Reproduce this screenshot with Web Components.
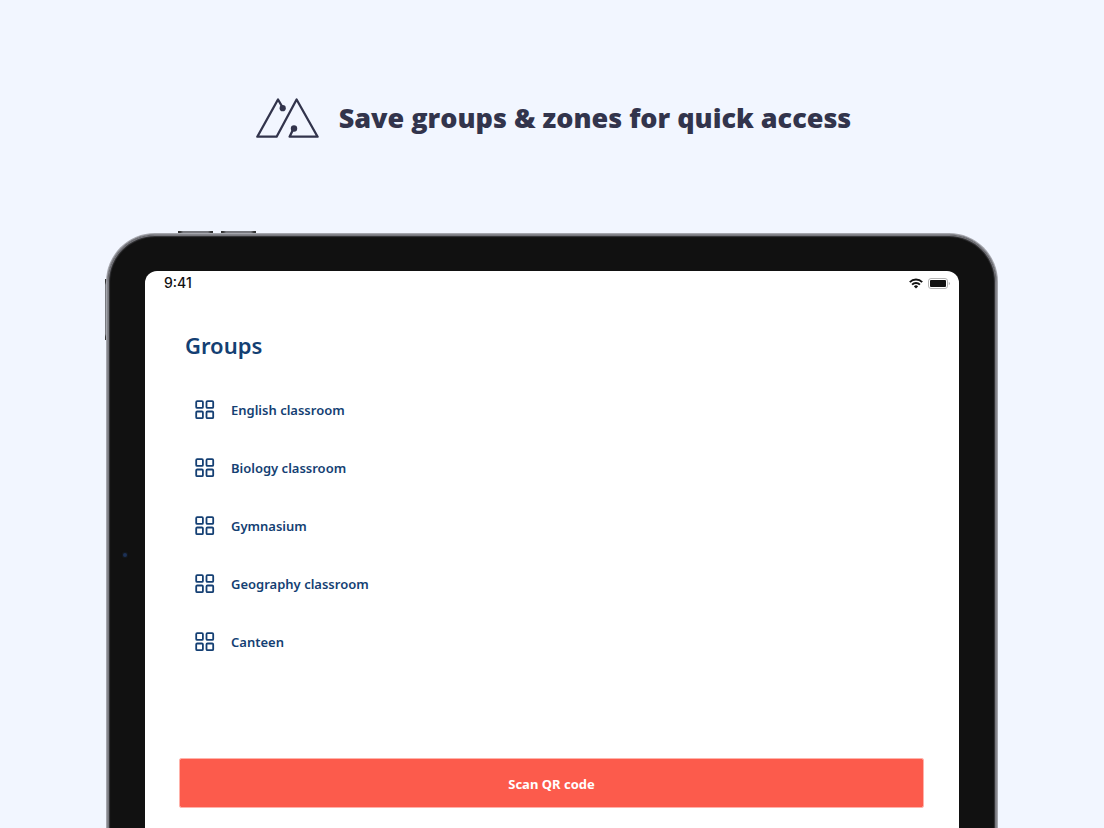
<!DOCTYPE html>
<html lang="en">
<head>
<meta charset="utf-8">
<meta name="viewport" content="width=device-width, initial-scale=1">
<title>Save groups &amp; zones</title>
<style>
html, body { margin: 0; height: 100%; }
body { background: #f2f6ff; font-family: "Noto Sans", "Open Sans", sans-serif; overflow: hidden; }
</style>
</head>
<body>
<promo-page>
  <promo-header slot="header">Save groups &amp; zones for quick access</promo-header>
  <tablet-frame>
    <status-bar>9:41</status-bar>
    <group-list heading="Groups">
      <group-item>English classroom</group-item>
      <group-item>Biology classroom</group-item>
      <group-item>Gymnasium</group-item>
      <group-item>Geography classroom</group-item>
      <group-item>Canteen</group-item>
    </group-list>
    <action-button>Scan QR code</action-button>
  </tablet-frame>
</promo-page>
<script>
function define(name, html, setup) {
  customElements.define(name, class extends HTMLElement {
    constructor() {
      super();
      this.attachShadow({ mode: "open" }).innerHTML = html;
    }
    connectedCallback() { if (setup) setup(this); }
  });
}

define("promo-page", `
<style>
:host { display: flex; flex-direction: column; height: 100vh; box-sizing: border-box; }
header { flex: none; box-sizing: border-box; height: 234px; display: flex; align-items: center; justify-content: center; padding: 2px 0 0 3px; }
main { flex: 1; display: flex; min-height: 0; padding: 0 107px; }
::slotted(tablet-frame) { flex: 1; }
</style>
<header><slot name="header"></slot></header>
<main><slot></slot></main>`);

define("promo-header", `
<style>
:host { display: flex; align-items: center; gap: 20px; color: #32344c; }
svg { display: block; flex: none; }
h1 { margin: 0; font-family: "Open Sans", "Noto Sans", sans-serif; font-size: 27px; line-height: 40px; font-weight: 800; white-space: nowrap; }
</style>
<svg width="63" height="40" viewBox="0 0 63 40" fill="none" stroke="currentColor" stroke-width="2.3" stroke-linejoin="round" stroke-linecap="round" aria-hidden="true">
  <path d="M26.6 9.4 22 1.5 1.3 38.7H20.6L40.6 1.5 61.6 38.7H33.6L37.8 30"/>
  <circle cx="26.7" cy="10.2" r="3.1" fill="currentColor" stroke="none"/>
  <circle cx="38" cy="30.5" r="3.2" fill="currentColor" stroke="none"/>
</svg>
<h1><slot></slot></h1>`);

define("tablet-frame", `
<style>
:host { display: flex; position: relative; min-width: 0; }
.body { flex: 1; display: flex; min-width: 0; position: relative; box-sizing: border-box;
  border: solid #85868c; border-width: 1px 1px 0; padding: 36px 37px 8px; margin-bottom: -8px; border-radius: 48px 48px 0 0; background: #111;
  box-shadow: 0 0 0 1px #a5a6ad, inset 0 0 0 1px #77777d, inset 0 0 1px 2px #38383b; }
.screen { flex: 1; min-width: 0; display: flex; flex-direction: column; background: #fff; border-radius: 12px 12px 0 0; }
.key { position: absolute; background: linear-gradient(90deg, #333 2px, #77787e 5px calc(100% - 5px), #333 calc(100% - 2px)); height: 3px; width: 35px; top: -3px; }
.k1 { left: 71px; } .k2 { left: 114px; }
.power { left: -2px; top: 45px; width: 3px; height: 61px; background: linear-gradient(#333 3px, #77787e 6px calc(100% - 6px), #333 calc(100% - 3px)); }
.camera { position: absolute; left: 15px; top: 318px; width: 4px; height: 4px; border-radius: 50%; background: #1d3156; box-shadow: 0 0 1px 1px #14191f; }
</style>
<span class="key k1"></span><span class="key k2"></span><span class="key power"></span>
<div class="body"><span class="camera"></span><div class="screen"><slot></slot></div></div>`);

define("status-bar", `
<style>
:host { display: flex; align-items: center; justify-content: space-between; height: 24px; padding: 0 9px 0 19px; color: #111; font: 500 14px/24px Inter, sans-serif; }
.icons { display: flex; align-items: center; gap: 5px; }
svg { display: block; }
</style>
<time><slot></slot></time>
<span class="icons">
<svg width="14" height="11" viewBox="0 0 14 11" fill="none" stroke="#111" stroke-width="2" aria-hidden="true">
  <path d="M.8 4.1a9 9 0 0 1 12.4 0M3.1 6.6a5.6 5.6 0 0 1 7.8 0"/>
  <path d="M4.9 8.4a3 3 0 0 1 4.2 0L7 10.6z" fill="#111" stroke="none"/>
</svg>
<svg width="22" height="11" viewBox="0 0 22 11" aria-hidden="true">
  <rect x=".5" y=".5" width="19" height="10" rx="2.5" fill="#fff" stroke="#b5b5b5"/>
  <rect x="2" y="2" width="16" height="7" rx="1" fill="#111"/>
  <path d="M20.8 4v3q1-.4 1-1.5t-1-1.5" fill="#aaa"/>
</svg>
</span>`);

define("group-list", `
<style>
:host { display: block; flex: 1; padding: 32px 40px 0; color: #143f73; }
h2 { margin: 0; font-size: 22px; line-height: 36px; font-weight: 600; }
.list { display: flex; flex-direction: column; margin-top: 18px; }
</style>
<h2></h2><div class="list" role="list"><slot></slot></div>`,
el => { el.shadowRoot.querySelector("h2").textContent = el.getAttribute("heading"); });

define("group-item", `
<style>
:host { display: flex; align-items: center; gap: 16px; height: 58px; padding-left: 10px; font-size: 13px; line-height: 20px; font-weight: 600; }
svg { display: block; flex: none; }
</style>
<svg width="20" height="20" viewBox="0 0 20 20" fill="none" stroke="currentColor" stroke-width="1.8" aria-hidden="true">
  <rect x="1.2" y="1.2" width="6.7" height="6.7" rx="1"/>
  <rect x="11.5" y="1.2" width="6.7" height="6.7" rx="1"/>
  <rect x="1.2" y="11.5" width="6.7" height="6.7" rx="1"/>
  <rect x="11.5" y="11.5" width="6.7" height="6.7" rx="1"/>
</svg>
<span><slot></slot></span>`,
el => el.setAttribute("role", "listitem"));

define("action-button", `
<style>
:host { display: block; padding: 0 35px 20px 34px; }
button { display: block; width: 100%; height: 50px; padding: 2px 0 0; border: 1px solid #ffb2aa; border-radius: 2px; background: #fc5b4c; background-clip: padding-box; color: #fff; font: inherit; font-size: 13px; line-height: 20px; font-weight: 700; cursor: pointer; }
</style>
<button type="button"><slot></slot></button>`);
</script>
</body>
</html>
